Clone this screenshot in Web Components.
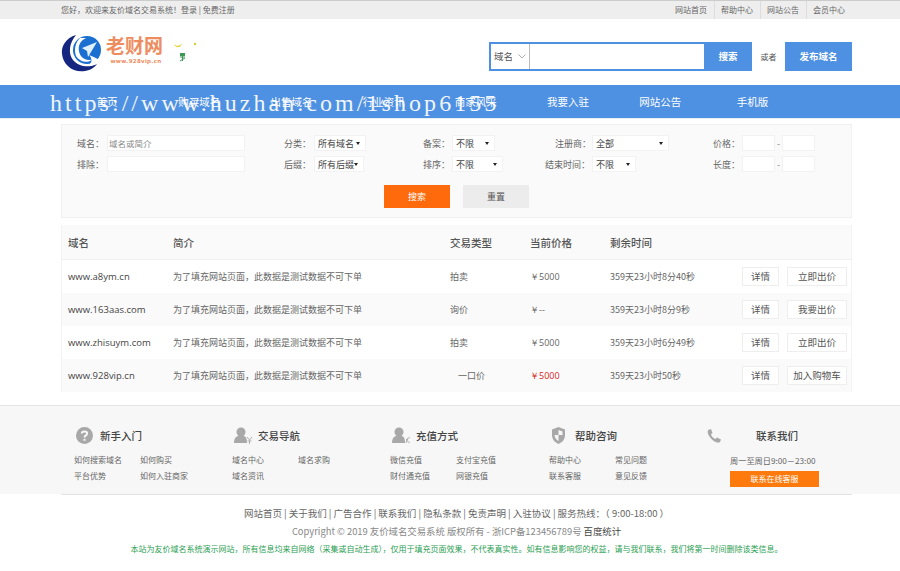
<!DOCTYPE html>
<html lang="zh">
<head>
<meta charset="utf-8">
<title>友价域名交易系统</title>
<style>
	html, body { margin: 0; padding: 0; background: #fff; }
	body { font-family: "Noto Sans CJK SC", "Open Sans", sans-serif; color: #555; font-size: 9px; }
</style>
</head>
<body>
<site-topbar></site-topbar>
<site-header></site-header>
<site-nav></site-nav>
<filter-panel></filter-panel>
<domain-table>
	<domain-row name="www.a8ym.cn" kind="拍卖" price="￥5000" left="359天23小时8分40秒" action="立即出价"></domain-row>
	<domain-row name="www.163aas.com" kind="询价" price="￥--" left="359天23小时8分9秒" action="我要出价"></domain-row>
	<domain-row name="www.zhisuym.com" kind="拍卖" price="￥5000" left="359天23小时6分49秒" action="立即出价"></domain-row>
	<domain-row name="www.928vip.cn" kind="一口价" price="￥5000" left="359天23小时50秒" action="加入购物车" hot></domain-row>
</domain-table>
<site-footer></site-footer>
<site-copy></site-copy>

<script>
class ShadowBase extends HTMLElement {
	connectedCallback() {
		if (!this.shadowRoot) this.attachShadow({ mode: "open" });
		this.render();
	}
}

class SiteTopbar extends ShadowBase {
	render() {
		this.shadowRoot.innerHTML = `
			<style>
				:host { display: block; height: 19px; box-sizing: border-box; background: #eee; border-top: 1px solid #ccc; }
				.wrap { width: 791px; margin-left: 61px; display: flex; justify-content: space-between; line-height: 18px; font-size: 8px; color: #666; }
				.links { display: flex; line-height: 18px; }
				.links span { padding: 0 7px 0 6px; border-left: 1px solid #ddd; }
				.links span:first-child { border-left: 0; }
			</style>
			<div class="wrap">
				<div>您好，欢迎来友价域名交易系统！登录 | 免费注册</div>
				<div class="links"><span>网站首页</span><span>帮助中心</span><span>网站公告</span><span>会员中心</span></div>
			</div>`;
	}
}

class SiteHeader extends ShadowBase {
	render() {
		this.shadowRoot.innerHTML = `
			<style>
				:host { display: block; height: 66px; box-sizing: border-box; padding: 14px 48px 0 61px; }
				.row { display: flex; align-items: flex-start; }
				.logo { display: flex; width: 428px; height: 40px; }
				.brand { margin-left: 3px; margin-top: -1px; width: 60px; }
				.brand b { display: block; font-size: 19px; line-height: 25px; color: #ee8c60; font-weight: 700; }
				.brand i { display: block; font-style: normal; font-family: "DejaVu Sans", sans-serif; font-size: 5.5px; line-height: 8px; color: #ee8c60; text-align: center; letter-spacing: .3px; font-weight: 700; }
				.search { margin-top: 9px; display: flex; width: 263px; height: 29px; box-sizing: border-box; border: 2px solid #4e90e2; border-right: 0; background: #fff; }
				.type { width: 39px; box-sizing: border-box; border-right: 1px solid #bbb; font-size: 9.5px; line-height: 25px; padding-left: 3px; color: #555; display: flex; justify-content: space-between; }
				.type svg { margin: 10px 3px 0 0; }
				.blank { flex: 1; }
				.btn { background: #4e90e2; color: #fff; font-weight: 700; font-size: 9.5px; text-align: center; }
				.go { width: 48px; line-height: 25px; }
				.or { margin: 9px 0 0; width: 33px; text-align: center; line-height: 29px; font-size: 8px; color: #555; }
				.pub { margin-top: 9px; width: 67px; height: 29px; line-height: 29px; }
			</style>
			<div class="row">
				<div class="logo">
					<svg width="42" height="40" viewBox="0 0 42 40">
						<path d="M15 2 C5 5 0 13 1 21 C2 32 12 40 24 38 C30 37 34 34 36 31 C28 35 18 34 12 27 C7 21 8 10 15 2Z" fill="#14267f"/>
						<circle cx="26" cy="17" r="14" fill="#1a6fd0"/>
						<path d="M19 5 C14 10 13 17 15 23 C19 29 26 31 32 26 C26 29 19 25 18 18 C17 13 19 8 25 5Z" fill="#fff"/>
						<path d="M36 9 L21 15 L26 18 L27 24Z" fill="#dff0fb"/>
						<path d="M28 22 C33 24 37 26 40 28 C36 31 31 33 27 33 C31 30 32 26 28 22Z" fill="#fff"/>
					</svg>
					<div class="brand"><b>老财网</b><i>www.928vip.cn</i></div>
					<svg width="30" height="30" viewBox="0 0 30 30" style="margin:6px 0 0 7px">
						<path d="M1 5 C4 8 7 7 9 4 C8 9 3 10 1 5Z" fill="#e6d23c"/>
						<circle cx="22" cy="5" r="1.2" fill="#d9d030"/>
						<rect x="7" y="14" width="5" height="3" fill="#3c9a55"/>
						<path d="M7 18h5M9.500 15v7M7 22l5-3" stroke="#3c9a55" stroke-width="1"/>
					</svg>
				</div>
				<div class="search">
					<div class="type">域名<svg width="8" height="5" viewBox="0 0 8 5"><path d="M.5 .5 L4 4 L7.500 .5" fill="none" stroke="#aaa"/></svg></div>
					<div class="blank"></div>
					<div class="btn go">搜索</div>
				</div>
				<div class="or">或者</div>
				<div class="btn pub">发布域名</div>
			</div>`;
	}
}

class SiteNav extends ShadowBase {
	render() {
		const items = ["首页", "购买域名", "出售域名", "行业资讯", "商家风采", "我要入驻", "网站公告", "手机版"];
		this.shadowRoot.innerHTML = `
			<style>
				:host { display: block; position: relative; height: 33px; background: #4e90e2; border-bottom: 1px solid #e8eef6; margin-bottom: 5px; }
				nav { display: grid; grid-template-columns: repeat(8, 92.2px); margin-left: 61px; }
				nav span { text-align: center; color: #fff; font-size: 10.5px; line-height: 33px; }
				.mark { position: absolute; left: 50px; top: 2px; font-family: "Liberation Serif", serif; font-size: 24px; line-height: 32px; letter-spacing: 3.05px; color: #fff; white-space: nowrap; opacity: .92; }
			</style>
			<nav>${items.map((t) => `<span>${t}</span>`).join("")}</nav>
			<div class="mark">https://www.huzhan.com/1shop6155</div>`;
	}
}

class FilterField extends ShadowBase {
	render() {
		const w = this.getAttribute("label-width") || "27";
		this.shadowRoot.innerHTML = `
			<style>
				:host { display: flex; align-items: center; height: 16px; font-size: 9px; color: #666; }
				.l { width: ${w}px; text-align: right; margin-right: 3px; white-space: nowrap; }
				.c { display: flex; align-items: center; }
			</style>
			<div class="l">${this.getAttribute("label")}：</div><div class="c"><slot></slot></div>`;
	}
}

class FilterSelect extends ShadowBase {
	render() {
		this.shadowRoot.innerHTML = `
			<style>
				:host { display: flex; align-items: center; justify-content: space-between; box-sizing: border-box; height: 16px; padding: 0 5px 0 3px; background: #fff; border: 1px solid #f2f2f2; font-size: 9px; color: #444; white-space: nowrap; width: ${this.getAttribute("w")}px; }
				i { flex: none; width: 0; height: 0; border: 2px solid transparent; border-top: 3px solid #222; border-bottom: 0; }
			</style>
			<span>${this.getAttribute("text")}</span><i></i>`;
	}
}

class FilterInput extends ShadowBase {
	render() {
		this.shadowRoot.innerHTML = `
			<style>
				:host { display: block; box-sizing: border-box; height: 16px; line-height: 14px; padding-left: 1px; background: #fff; border: 1px solid #f2f2f2; font-size: 8.500px; color: #888; width: ${this.getAttribute("w")}px; }
			</style>${this.getAttribute("text") || ""}`;
	}
}

class FilterPanel extends ShadowBase {
	render() {
		this.shadowRoot.innerHTML = `
			<style>
				:host { display: block; margin-left: 61px; width: 791px; height: 94px; box-sizing: border-box; background: #fafafa; border: 1px solid #f0f0f0; padding: 10px 0 0 15px; }
				.grid { display: grid; grid-template-columns: 207px 139px 122px 168px 1fr; row-gap: 5px; }
				.dash { width: 7px; text-align: center; color: #888; }
				.acts { display: flex; margin: 13px 0 0 307px; gap: 13px; }
				.acts div { width: 66px; height: 23px; line-height: 23px; text-align: center; font-size: 9px; }
				.s { background: #ff6a0c; color: #fff; }
				.r { background: #ececec; color: #555; }
			</style>
			<div class="grid">
				<filter-field label="域名" label-width="27"><filter-input w="138" text="域名或简介"></filter-input></filter-field>
				<filter-field label="分类" label-width="27"><filter-select w="52" text="所有域名"></filter-select></filter-field>
				<filter-field label="备案" label-width="26"><filter-select w="43" text="不限"></filter-select></filter-field>
				<filter-field label="注册商" label-width="34" style="margin-left:10px"><filter-select w="77" text="全部"></filter-select></filter-field>
				<filter-field label="价格" label-width="26"><filter-input w="33"></filter-input><span class="dash">-</span><filter-input w="33"></filter-input></filter-field>
				<filter-field label="排除" label-width="27"><filter-input w="138"></filter-input></filter-field>
				<filter-field label="后缀" label-width="27"><filter-select w="50" text="所有后缀"></filter-select></filter-field>
				<filter-field label="排序" label-width="26"><filter-select w="51" text="不限"></filter-select></filter-field>
				<filter-field label="结束时间" label-width="44"><filter-select w="44" text="不限"></filter-select></filter-field>
				<filter-field label="长度" label-width="26"><filter-input w="33"></filter-input><span class="dash">-</span><filter-input w="33"></filter-input></filter-field>
			</div>
			<div class="acts"><div class="s">搜索</div><div class="r">重置</div></div>`;
	}
}

class DomainTable extends ShadowBase {
	render() {
		this.shadowRoot.innerHTML = `
			<style>
				:host { display: block; margin: 7px 0 0 61px; width: 791px; box-sizing: border-box; border-left: 1px solid #f3f3f3; border-right: 1px solid #f3f3f3; }
				.head { display: grid; grid-template-columns: 105px 277px 80px 80px 1fr; height: 35px; line-height: 35px; padding-left: 6px; background: #fafafa; border-bottom: 1px solid #f0f0f0; box-sizing: border-box; font-size: 10.5px; font-weight: 500; color: #555; }
				::slotted(domain-row:nth-child(even)) { background: #fafafa; }
			</style>
			<div class="head"><span>域名</span><span>简介</span><span>交易类型</span><span>当前价格</span><span>剩余时间</span></div>
			<slot></slot>`;
	}
}

class DomainRow extends ShadowBase {
	render() {
		const a = (n) => this.getAttribute(n);
		const one = a("kind").length > 2;
		this.shadowRoot.innerHTML = `
			<style>
				:host { display: grid; grid-template-columns: 105px 277px 80px 80px 132px 37px 68px; align-items: center; height: 33px; padding-left: 6px; font-size: 9px; color: #666; }
				.n { font-family: "Open Sans", sans-serif; color: #444; font-size: 9.500px; }
				.p { font-family: "Open Sans", sans-serif; font-size: 9px; color: ${a("hot") !== null ? "#d81e1e" : "#666"}; }
				.k { ${one ? "padding-left: 8px;" : ""} }
				.b { box-sizing: border-box; height: 19px; line-height: 17px; text-align: center; background: #fff; border: 1px solid #eee; color: #555; font-size: 9.500px; white-space: nowrap; }
				.b2 { margin-left: 8px; }
			</style>
			<span class="n">${a("name")}</span>
			<span>为了填充网站页面，此数据是测试数据不可下单</span>
			<span class="k">${a("kind")}</span>
			<span class="p">${a("price")}</span>
			<span>${a("left")}</span>
			<div class="b">详情</div>
			<div class="b b2">${a("action")}</div>`;
	}
}

const ICONS = {
	help: `<svg width="17" height="17" viewBox="0 0 17 17"><circle cx="8.500" cy="8.500" r="8.500" fill="#a8a8a8"/><path d="M5.800 6.500 C5.800 3.800 11.200 3.800 11.200 6.500 C11.200 8.500 8.500 8.300 8.500 10.500" fill="none" stroke="#f7f7f7" stroke-width="1.900"/><rect x="7.500" y="11.800" width="2" height="2" fill="#f7f7f7"/></svg>`,
	yen: `<svg width="19" height="17" viewBox="0 0 19 17"><circle cx="7" cy="5" r="4.500" fill="#a8a8a8"/><path d="M0 16 C0 10 3 9 5 9 H9 C11 9 13 10 13 16Z" fill="#a8a8a8"/><path d="M13 10 L15.500 13 L18 10 M15.500 13 V17 M13.500 14 H17.500" fill="none" stroke="#b0b0b0"/></svg>`,
	wrench: `<svg width="19" height="17" viewBox="0 0 19 17"><circle cx="7" cy="5" r="4.500" fill="#a8a8a8"/><path d="M0 16 C0 10 3 9 5 9 H9 C11 9 13 10 13 16Z" fill="#a8a8a8"/><path d="M14 16 L16 11 M14 13 L18 10 M14 13 L18 16" fill="none" stroke="#b0b0b0"/></svg>`,
	shield: `<svg width="15" height="17" viewBox="0 0 15 17"><path d="M7.500 0 L14 2.500 V8 C14 12.500 11 15.500 7.500 17 C4 15.500 1 12.500 1 8 V2.500Z" fill="#a8a8a8"/><path d="M7.500 3 L11.500 4.500 V8 H7.500Z M7.500 8 V14 C5.500 13 3.800 11 3.500 8Z" fill="#f7f7f7"/></svg>`,
	phone: `<svg width="14" height="14" viewBox="0 0 14 14"><path d="M1 1 L4 0 L5.500 4 L4 5.500 C4.500 7.500 6.500 9.500 8.500 10 L10 8.500 L14 10.500 L13 13 C12 14 9 14 5.500 11 C2 8 0 4 1 1Z" fill="#a8a8a8"/></svg>`,
};

class FooterCol extends ShadowBase {
	render() {
		const links = (this.getAttribute("links") || "").split(",").filter(Boolean);
		this.shadowRoot.innerHTML = `
			<style>
				:host { display: block; font-size: 8px; color: #666; }
				.h { display: flex; align-items: center; height: 17px; font-size: 10.5px; font-weight: 500; color: #444; }
				.h .i { width: 24px; display: flex; margin-left: 2px; }
				ul { list-style: none; margin: 8px 0 0; padding: 0; display: grid; grid-template-columns: 66px 66px; grid-auto-rows: 16px; line-height: 16px; }
			</style>
			<div class="h"><span class="i">${ICONS[this.getAttribute("icon")]}</span>${this.getAttribute("title")}</div>
			<ul>${links.map((t) => `<li>${t}</li>`).join("")}</ul>`;
	}
}

class SiteFooter extends ShadowBase {
	render() {
		this.shadowRoot.innerHTML = `
			<style>
				:host { display: block; margin-top: 13px; height: 89px; box-sizing: border-box; background: #f7f7f7; border-top: 1px solid #e4e4e4; position: relative; }
				.cols { display: grid; grid-template-columns: 158px 158px 159px 158px 1fr; padding: 21px 0 0 74px; }
				.contact { font-size: 8.2px; color: #666; }
				.contact .h { display: flex; align-items: center; height: 17px; font-size: 10.5px; font-weight: 500; color: #444; }
				.contact .t { margin: 8px 0 0 23px; line-height: 16px; white-space: nowrap; }
				.contact .b { margin: 3px 0 0 23px; width: 89px; height: 16px; line-height: 16px; text-align: center; background: #ff7a0c; color: #fff; font-size: 8px; }
				.contact svg { margin-right: 35px; }
				.rule { position: absolute; left: 61px; right: 48px; bottom: -1px; height: 1px; background: #e2e2e2; }
			</style>
			<div class="cols">
				<footer-col icon="help" title="新手入门" links="如何搜索域名,如何购买,平台优势,如何入驻商家"></footer-col>
				<footer-col icon="yen" title="交易导航" links="域名中心,域名求购,域名资讯"></footer-col>
				<footer-col icon="wrench" title="充值方式" links="微信充值,支付宝充值,财付通充值,网银充值"></footer-col>
				<footer-col icon="shield" title="帮助咨询" links="帮助中心,常见问题,联系客服,意见反馈"></footer-col>
				<div class="contact">
					<div class="h">${ICONS.phone}联系我们</div>
					<div class="t">周一至周日9:00－23:00</div>
					<div class="b">联系在线客服</div>
				</div>
			</div>
			<div class="rule"></div>`;
	}
}

class SiteCopy extends ShadowBase {
	render() {
		this.shadowRoot.innerHTML = `
			<style>
				:host { display: block; text-align: center; padding: 10px 0 0 13px; font-size: 9.5px; color: #666; }
				div { height: 18px; line-height: 18px; white-space: nowrap; }
				.c { font-size: 9.4px; color: #888; }
				.c b { font-weight: 400; color: #444; }
				.g { color: #2aa052; font-size: 8px; }
			</style>
			<div>网站首页 | 关于我们 | 广告合作 | 联系我们 | 隐私条款 | 免责声明 | 入驻协议 | 服务热线：（ 9:00-18:00 ）</div>
			<div class="c">Copyright © 2019 友价域名交易系统 版权所有 - 浙ICP备123456789号 <b>百度统计</b></div>
			<div class="g">本站为友价域名系统演示网站，所有信息均来自网络（采集或自动生成），仅用于填充页面效果，不代表真实性。如有信息影响您的权益，请与我们联系，我们将第一时间删除该类信息。</div>`;
	}
}

customElements.define("site-topbar", SiteTopbar);
customElements.define("site-header", SiteHeader);
customElements.define("site-nav", SiteNav);
customElements.define("filter-field", FilterField);
customElements.define("filter-select", FilterSelect);
customElements.define("filter-input", FilterInput);
customElements.define("filter-panel", FilterPanel);
customElements.define("domain-table", DomainTable);
customElements.define("domain-row", DomainRow);
customElements.define("footer-col", FooterCol);
customElements.define("site-footer", SiteFooter);
customElements.define("site-copy", SiteCopy);
</script>
</body>
</html>
